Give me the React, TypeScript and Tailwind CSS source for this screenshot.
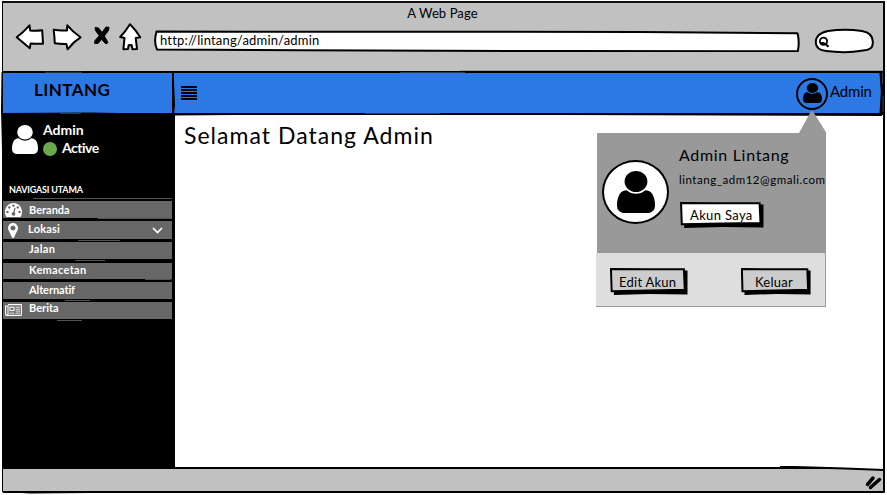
import React from "react";

function UserIcon({ className }: { className: string }) {
  return (
    <svg className={className} viewBox="256 128 1280 1536" preserveAspectRatio="none" fill="currentColor">
      <path d="M1536 1399q0 109-62.5 187t-150.5 78h-854q-88 0-150.5-78t-62.5-187q0-85 8.5-160.5t31.5-152 58.5-131 94-89 134.5-34.5q131 128 313 128t313-128q76 0 134.5 34.5t94 89 58.5 131 31.5 152 8.5 160.5zm-256-887q0 159-112.5 271.5t-271.5 112.5-271.5-112.5-112.5-271.5 112.5-271.5 271.5-112.5 271.5 112.5 112.5 271.5z" />
    </svg>
  );
}

function GaugeIcon() {
  return (
    <svg className="h-[14px] w-[17px]" viewBox="0 256 1792 1408" preserveAspectRatio="none" fill="currentColor">
      <path d="M384 1152q0-53-37.5-90.5t-90.5-37.5-90.5 37.5-37.5 90.5 37.5 90.5 90.5 37.5 90.5-37.5 37.5-90.5zm192-448q0-53-37.5-90.5t-90.5-37.5-90.5 37.5-37.5 90.5 37.5 90.5 90.5 37.5 90.5-37.5 37.5-90.5zm428 481l101-382q6-26-7.5-48.5t-38.5-29.5-48 6.5-30 39.5l-101 382q-60 5-107 43.5t-63 98.5q-20 77 20 146t117 89 146-20 89-117q16-60-6-117t-72-91zm660-33q0-53-37.5-90.5t-90.5-37.5-90.5 37.5-37.5 90.5 37.5 90.5 90.5 37.5 90.5-37.5 37.5-90.5zm-640-640q0-53-37.5-90.5t-90.5-37.5-90.5 37.5-37.5 90.5 37.5 90.5 90.5 37.5 90.5-37.5 37.5-90.5zm448 192q0-53-37.5-90.5t-90.5-37.5-90.5 37.5-37.5 90.5 37.5 90.5 90.5 37.5 90.5-37.5 37.5-90.5zm320 448q0 261-141 483-19 29-54 29h-1402q-35 0-54-29-141-221-141-483 0-182 71-348t191-286 286-191 348-71 348 71 286 191 191 286 71 348z" />
    </svg>
  );
}

function PinIcon() {
  return (
    <svg className="ml-[3px] h-[15px] w-[10px]" viewBox="384 128 1024 1536" fill="currentColor">
      <path d="M1152 640q0-106-75-181t-181-75-181 75-75 181 75 181 181 75 181-75 75-181zm256 0q0 109-33 179l-364 774q-16 33-47.5 52t-67.5 19-67.5-19-46.5-52l-365-774q-33-70-33-179 0-212 150-362t362-150 362 150 150 362z" />
    </svg>
  );
}

function NewsIcon() {
  return (
    <svg className="-mt-px h-[12px] w-[17px]" viewBox="0 0 17 12" fill="none" stroke="currentColor">
      <path d="M3 .6H16.4V10.4Q16.4 11.4 15.4 11.4H1.8Q.6 11.4 .6 10V2H3V10Q3 11.2 1.8 11.4" strokeWidth="1.1" />
      <rect x="5" y="3.2" width="4" height="3.4" strokeWidth="1.1" />
      <path d="M10.5 3.2H15M10.5 5.2H15M10.5 7.1H15M4.5 9.1H9.3M10.5 9.1H15" strokeWidth=".9" />
    </svg>
  );
}

function BrowserIcons() {
  return (
    <svg className="ml-[11px] h-[30px] w-[130px] shrink-0" viewBox="14 22 130 30" fill="white" stroke="black" strokeWidth="2" strokeLinejoin="round" strokeLinecap="round">
      <path d="M16.7 37.3Q23 32.5 29.5 25.3L30.2 30.5Q36 31 42.2 30.2L43 43.8Q37 44 30.6 43.4L29.8 48.2Q23.5 43 16.7 37.3Z" />
      <path d="M53.7 29.8Q60 31 67 30.4L67.3 25.3Q73 32 80.5 37.3Q73 42 67.6 49.3L66.4 44Q60 44.2 54.8 43.3Q54.5 36 53.7 29.8Z" />
      <path d="M95.5 27.5L98.5 28L102 32.5L106 27L109 27.300L108.500 30.500L104.300 36L108 42.500L106 44L101.500 39.500L98 43.500L94.500 43.300L95 40.500L99.300 35.800L95.500 30.500Z" fill="black" strokeWidth="1" />
      <path d="M130 24.2Q125 32 120.2 37L124.5 38L123.4 49.2L128 49L128.6 45.3L131.6 45L132.5 49.2L137 49L135.7 38L140.2 37.3Q136 30 130 24.2Z" />
    </svg>
  );
}

function AddressBar() {
  return (
    <div className="relative ml-[9px] mt-[8px] h-[22px] w-[647px] shrink-0">
      <svg className="absolute inset-0 h-full w-full" viewBox="153 30 647 22" fill="white" stroke="black" strokeWidth="2" strokeLinejoin="round">
        <path d="M156.5 31.6L470 31.8L640 32.1L797.5 33.3Q799.8 42 797.8 51.2L560 51.1L300 50.2L157 49.5Q153.5 42 156.5 31.6Z" />
      </svg>
      <div className="relative pl-[7px] text-[13px] leading-[21px] tracking-[0.18px]">http://lintang/admin/admin</div>
    </div>
  );
}

function SearchBox() {
  return (
    <svg className="ml-[13px] mt-[6px] h-[26px] w-[62px] shrink-0" viewBox="813 28 62 26" fill="white" stroke="black" strokeWidth="2">
      <path d="M828 31Q845 28.5 862 31Q873.5 33 872.8 43Q873 50 863 50.5Q846 53.5 826 51Q815.5 49.5 815.8 42Q816 33.5 828 31Z" />
      <circle cx="823.5" cy="41.2" r="3.6" strokeWidth="1.8" />
      <path d="M820 43.5Q824 41.5 828.5 46.8" fill="none" />
    </svg>
  );
}

const rows: { label: string; icon?: React.ReactNode; box: string; text: string; chevron?: boolean }[] = [
  { label: "Beranda", icon: <GaugeIcon />, box: "h-[17px] mb-[3px]", text: "" },
  { label: "Lokasi", icon: <PinIcon />, box: "h-[18px] mb-[3px]", text: "-ml-px -mt-[2px] tracking-[0.2px]", chevron: true },
  { label: "Jalan", box: "h-[17px] mb-[4px]", text: "-mt-[4px] tracking-[0.3px]" },
  { label: "Kemacetan", box: "h-[16px] mb-[3px]", text: "-mt-[2px] tracking-[0.3px]" },
  { label: "Alternatif", box: "h-[17px] mb-[3px]", text: "-mt-[2px] tracking-[-0.1px]" },
  { label: "Berita", icon: <NewsIcon />, box: "h-[17px]", text: "-mt-[6px]" },
];

function Sidebar() {
  return (
    <aside className="flex w-[172px] shrink-0 flex-col bg-black text-white">
      <div className="flex h-[69px] pl-[9px] pt-[10px]">
        <UserIcon className="h-[29px] w-[26px] shrink-0" />
        <div className="ml-[5px] -mt-[4px] text-[14px] font-bold">
          <div className="leading-[18px]">Admin</div>
          <div className="flex h-[18px] items-center gap-[5px] leading-[18px]">
            <span className="mt-[2px] h-[14px] w-[14px] rounded-full bg-[#6aa84f]" />
            <span className="tracking-[-0.5px]">Active</span>
          </div>
        </div>
      </div>
      <div className="mb-[2px] h-[13px] pl-[6px] text-[9px] font-bold leading-[11px] tracking-[-0.2px]">NAVIGASI UTAMA</div>
      <nav className="pr-[3px] pt-[2px]">
        {rows.map((r) => (
          <div key={r.label} className={`flex items-center bg-[#676767] pl-[2px] text-[11px] font-bold leading-[16px] ${r.box}`}>
            <div className="w-[24px] shrink-0">{r.icon}</div>
            <span className={r.text}>{r.label}</span>
            {r.chevron && (
              <svg className="ml-auto mr-[9px] h-[7px] w-[11px]" viewBox="0 0 11 7" fill="none" stroke="white" strokeWidth="1.7">
                <path d="M1 1L5.5 5.5L10 1" />
              </svg>
            )}
          </div>
        ))}
      </nav>
    </aside>
  );
}

function SketchButton({ label, size, text, fill }: { label: string; size: string; text: string; fill: string }) {
  return (
    <button className={`relative block shrink-0 ${size}`}>
      <svg className="absolute inset-0 h-full w-full" viewBox="0 0 80 26" preserveAspectRatio="none">
        <path d="M3.5 4L76 2.5H79.5V25.5L40 25L4 26V23L1 22.5Z" fill="black" />
        <path d="M1 1L40 1.3L75.8 1.2L76.7 21L40 21.6L1.7 22.3Z" fill={fill} stroke="black" strokeWidth="2" vectorEffect="non-scaling-stroke" />
      </svg>
      <span className={`relative block whitespace-nowrap text-left text-[13px] leading-[20px] ${text}`}>{label}</span>
    </button>
  );
}

function AccountPopup() {
  return (
    <div className="absolute left-[596px] top-[111px] w-[231px]">
      <svg className="ml-[203px] block h-[22px] w-[28px]" viewBox="0 0 28 22" fill="#999999">
        <path d="M13 0Q14 0 15 2L27.5 22H0L11 2Q12 0 13 0Z" />
      </svg>
      <div className="ml-px flex h-[120px] w-[229px] bg-[#999999]">
        <div className="ml-[5px] mt-[27px] flex h-[64px] w-[67px] shrink-0 items-center justify-center rounded-[50%] border-2 border-black bg-white">
          <UserIcon className="h-[42px] w-[38px]" />
        </div>
        <div className="ml-[11px] pt-[11px]">
          <div className="-ml-px whitespace-nowrap text-[16px] leading-[22px] tracking-[0.68px]">Admin Lintang</div>
          <div className="-ml-px mt-[6px] whitespace-nowrap text-[11.5px] leading-[16px] tracking-[0.52px]">lintang_adm12@gmali.com</div>
          <div className="mt-[14px]">
            <SketchButton label="Akun Saya" size="h-[26px] w-[84px]" text="pl-[10px] tracking-[0.35px]" fill="#ffffff" />
          </div>
        </div>
      </div>
      <div className="flex h-[54px] w-[230px] items-start border-b border-r border-[#999999] bg-[#dedede] pt-[15px]">
        <SketchButton label="Edit Akun" size="ml-[14px] h-[27px] w-[78px]" text="pl-[9px] tracking-[0.25px]" fill="#cccccc" />
        <SketchButton label="Keluar" size="ml-[53px] h-[27px] w-[70px]" text="pl-[14px] tracking-[0.25px]" fill="#cccccc" />
      </div>
    </div>
  );
}

// Uneven pen strokes drawn over the window's straight rules.
function PenStrokes() {
  return (
    <svg className="pointer-events-none absolute inset-0 h-full w-full" viewBox="0 0 887 495" fill="none" stroke="black">
      <path d="M2 72L1.5 110L2.5 150M173 71L174.5 105L173.5 114L174.5 240L173.5 262L174 468" strokeWidth="1" />
      <path d="M2 71.5H180M460 71.3H884M4 113.5L90 113L174 114.5M175 115L300 114M560 114.5L882 115.5" strokeWidth="1" />
      <path d="M881 73L882.3 92L881 114" strokeWidth="3" />
      <path d="M882.5 73V84M883 96V112" stroke="#52677f" strokeWidth=".7" />
      <path d="M45 72.3H82M400 72.5H465M60 113.5H81M365 113.5H440" stroke="#46658f" strokeWidth=".6" />
      <path d="M33 198.5H172M98 218.5H172M78 240.5H120M75 260.5H105M145 279.5H171M65 300.5H90M57 320.5H82" stroke="#777777" strokeWidth=".7" />
      <path d="M4 491.5L30 493L90 492.5L130 491.5L250 492L885 491.8" strokeWidth="1" />
      <path d="M795 466L883 466V470Z" fill="white" stroke="none" />
      <path d="M780 467L795 467L845 468.5L884 470" strokeWidth="2" />
      <path d="M867.5 484.5L873 478M870.5 487.5L879.5 479.5" strokeWidth="3.5" strokeLinecap="round" />
    </svg>
  );
}

export default function App() {
  return (
    <div className="relative flex h-[495px] w-[887px] flex-col overflow-hidden bg-white font-['Lato',sans-serif] text-black">
      <div className="mx-[2px] mt-px flex h-[492px] flex-col overflow-hidden rounded-b-[2px] border-2 border-l-1 border-black border-t-[#111111]">
        <header className="h-[68px] shrink-0 bg-[#c1c1c1]">
          <div className="h-[19px] pr-px pt-px text-center text-[13px] leading-[18px] tracking-[0.1px]">A Web Page</div>
          <div className="flex h-[30px] items-start">
            <BrowserIcons />
            <AddressBar />
            <SearchBox />
          </div>
        </header>
        <div className="flex h-[44px] shrink-0 border-y-2 border-black">
          <div className="w-[169px] bg-[#2c78e4] pl-[31px] text-[17px] font-bold leading-[34px] tracking-[0.45px]">LINTANG</div>
          <div className="w-[2px] bg-black" />
          <div className="flex w-[707px] bg-[#2c78e4]">
            <svg className="ml-[7px] mt-[13px] h-[14px] w-[16px]" viewBox="0 0 16 14" stroke="black" strokeWidth="2">
              <path d="M0 1H16M0 4H16M0 7H16M0 10H16M0 13H16" />
            </svg>
            <div className="ml-auto mt-[5px] flex h-[32px] w-[32px] items-center justify-center rounded-full border-2 border-black">
              <UserIcon className="mb-[2px] h-[20px] w-[19px]" />
            </div>
            <span className="ml-[2px] mr-[8px] w-[43px] text-[15px] leading-[36px] tracking-[-0.2px]">Admin</span>
          </div>
          <div className="w-[2px] bg-black" />
        </div>
        <div className="flex h-[352px] shrink-0">
          <Sidebar />
          <main className="flex-1 bg-white pl-[9px] pt-[5px]">
            <h1 className="text-[23px] leading-[30px] tracking-[1.03px]">Selamat Datang Admin</h1>
          </main>
        </div>
        <footer className="flex-1 border-t-2 border-black bg-[#c1c1c1]" />
      </div>
      <PenStrokes />
      <AccountPopup />
    </div>
  );
}
